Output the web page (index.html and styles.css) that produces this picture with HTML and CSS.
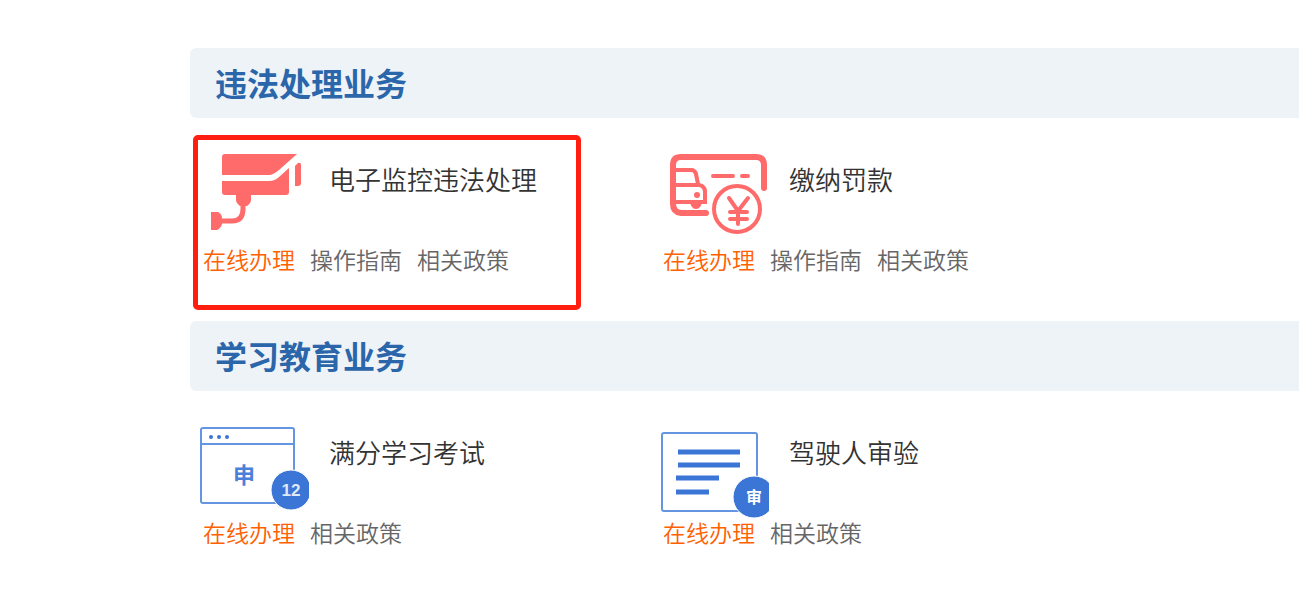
FILE: index.html
```html
<!DOCTYPE html>
<html lang="zh-CN">
<head>
    <meta charset="UTF-8">
    <meta name="viewport" content="width=device-width, initial-scale=1.0">
    <title>业务办理</title>
    <link rel="stylesheet" href="styles.css">
</head>
<body>
    <main>
        <section>
            <h2>违法处理业务</h2>
            <div class="services">
                <div class="service active">
                    <div class="service-head">
                        <svg class="icon icon-red" viewBox="0 0 110 100" aria-hidden="true">
                            <path class="solid" d="M26 9H98L80 25Q74 30 70 30H23V12Q23 9 26 9Z"/>
                            <path class="solid" d="M23 36H70Q76 36 80 32L90 23V47Q90 50 87 50H26Q23 50 23 47Z"/>
                            <path class="solid" d="M96 21L99 18Q102 17 102 20V38Q102 41 99 41H96Z"/>
                            <path class="solid" d="M37 49H52V55Q52 58 48 61H41Q37 58 37 55Z"/>
                            <path class="solid" d="M12 67H19Q23 69 23 73V79Q22 83 18 85H12Z"/>
                            <path d="M44 60V64Q44 76 33 76H22" stroke-width="5"/>
                        </svg>
                        <h3>电子监控违法处理</h3>
                    </div>
                    <div class="links">
                        <a class="online" href="#">在线办理</a>
                        <a href="#">操作指南</a>
                        <a href="#">相关政策</a>
                    </div>
                </div>
                <div class="service">
                    <div class="service-head">
                        <svg class="icon icon-red" viewBox="0 0 110 100" aria-hidden="true">
                            <path d="M47 68H22Q14 67 14 59V20Q14 12 22 12H97Q105 12 105 20V43" stroke-width="6" stroke-linecap="round"/>
                            <path d="M16 25H32Q36 25 37 29L39 39M16 40H40Q46 41 46 47V57H16" stroke-width="4"/>
                            <circle class="solid" cx="38" cy="50" r="3"/>
                            <path class="solid" d="M31 58H43Q41 64 37 64T31 58Z"/>
                            <path d="M54 31H74M83 31H89" stroke-width="4" stroke-linecap="round"/>
                            <circle cx="78" cy="64" r="23" stroke-width="4"/>
                            <path d="M70 53L79 66L89 53M79 66V79M71 67H88M71 74H88" stroke-width="4" stroke-linecap="round"/>
                        </svg>
                        <h3>缴纳罚款</h3>
                    </div>
                    <div class="links">
                        <a class="online" href="#">在线办理</a>
                        <a href="#">操作指南</a>
                        <a href="#">相关政策</a>
                    </div>
                </div>
            </div>
        </section>

        <section>
            <h2>学习教育业务</h2>
            <div class="services">
                <div class="service">
                    <div class="service-head">
                        <svg class="icon icon-blue" viewBox="0 0 110 100" aria-hidden="true">
                            <rect x="2" y="10" width="93" height="75" rx="2" stroke-width="2"/>
                            <path d="M2 26H95" stroke-width="2"/>
                            <circle class="solid" cx="12" cy="19" r="2"/>
                            <circle class="solid" cx="20" cy="19" r="2"/>
                            <circle class="solid" cx="28" cy="19" r="2"/>
                            <text class="mark" x="45" y="65">申</text>
                            <circle class="badge" cx="92" cy="72" r="20"/>
                            <text class="badge-number" x="92" y="78">12</text>
                        </svg>
                        <h3>满分学习考试</h3>
                    </div>
                    <div class="links">
                        <a class="online" href="#">在线办理</a>
                        <a href="#">相关政策</a>
                    </div>
                </div>
                <div class="service">
                    <div class="service-head">
                        <svg class="icon icon-blue" viewBox="0 0 110 100" aria-hidden="true">
                            <rect x="3" y="15" width="95" height="78" rx="2" stroke-width="2"/>
                            <path class="lines" d="M19 34H81M19 47H81M17 60H60M17 74H50" stroke-width="5"/>
                            <circle class="badge" cx="95" cy="79" r="21"/>
                            <text class="badge-text" x="95" y="85">审</text>
                        </svg>
                        <h3>驾驶人审验</h3>
                    </div>
                    <div class="links">
                        <a class="online" href="#">在线办理</a>
                        <a href="#">相关政策</a>
                    </div>
                </div>
            </div>
        </section>
    </main>
</body>
</html>
```
FILE: styles.css
```css
body {
    margin: 0;
    background-color: #ffffff;
    color: #333333;
    font-family: "Noto Sans CJK SC", sans-serif;
}
main {
    padding: 48px 0 0 190px;
}
h2 {
    margin: 0;
    padding: 0 0 2px 25px;
    background-color: #eef3f8;
    border-radius: 6px 0 0 6px;
    color: #2c66aa;
    font-size: 32px;
    line-height: 68px;
}
.services {
    display: grid;
    grid-template-columns: repeat(auto-fill, 460px);
}
.service {
    position: relative;
    padding: 27px 9px 48px;
}
.active::after {
    content: "";
    position: absolute;
    inset: 17px 69px 11px 3px;
    border: 5px solid #ff1e10;
    border-radius: 5px;
    pointer-events: none;
}
.service-head {
    display: flex;
    gap: 20px;
}
h3 {
    margin: 0;
    font-size: 26px;
    font-weight: 350;
    line-height: 68px;
}
.links {
    display: flex;
    gap: 15px;
    padding-left: 4px;
    font-size: 23px;
    font-weight: 350;
    line-height: 28px;
}
.links a {
    color: #666666;
    text-decoration: none;
}
.links .online {
    color: #ff6000;
}

.icon {
    width: 110px;
    height: 100px;
    fill: none;
}
.icon-red {
    stroke: #ff6b6b;
}
.icon-red .solid {
    fill: #ff6b6b;
    stroke: none;
}
.icon-blue {
    stroke: #6595e0;
}
.icon-blue .solid {
    fill: #3b75d5;
    stroke: none;
}
.icon-blue .lines {
    stroke: #3b75d5;
}
.icon-blue .badge {
    fill: #3b75d5;
    stroke: #ffffff;
    stroke-width: 1;
}
.icon text {
    stroke: none;
    text-anchor: middle;
    font-weight: bold;
}
.mark {
    fill: #4a80d9;
    font-size: 22px;
}
.badge-number {
    fill: #dfe9f9;
    font-family: "Liberation Sans", sans-serif;
    font-size: 17px;
}
.badge-text {
    fill: #ffffff;
    font-size: 16px;
}
```
